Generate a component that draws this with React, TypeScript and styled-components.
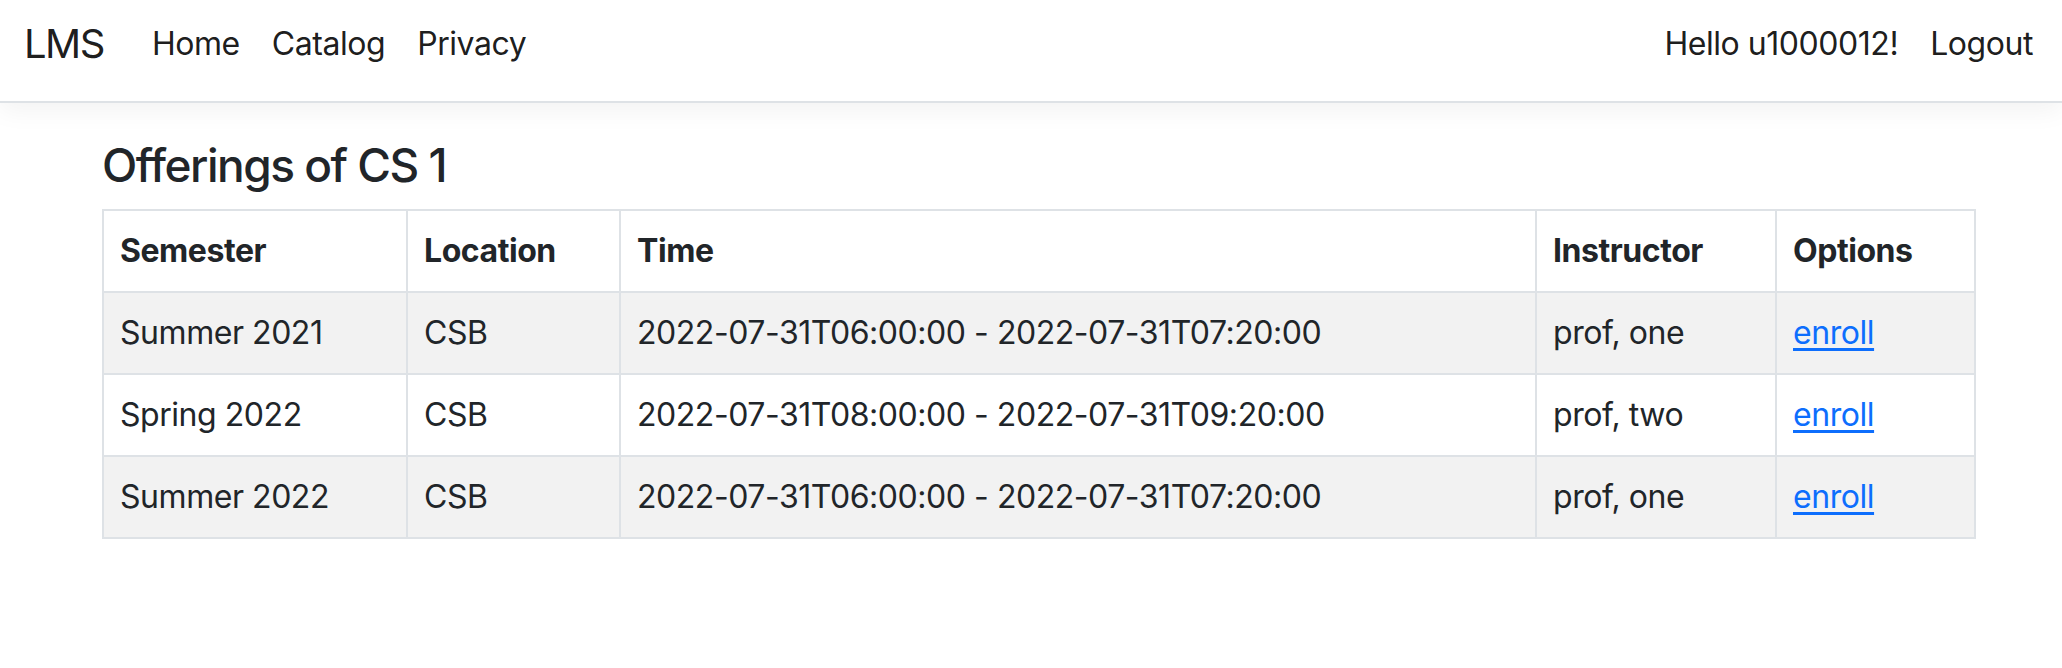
import React from "react";
import styled, { createGlobalStyle } from "styled-components";

const GlobalStyle = createGlobalStyle`
  html, body { margin: 0; padding: 0; background: #fff; }
  body {
    font-family: Inter, "Noto Sans", "Liberation Sans", sans-serif;
    color: #212529;
    font-size: 32px;
    line-height: 1.5;
    letter-spacing: -0.45px;
  }
  * { box-sizing: border-box; }
`;

const NavBar = styled.header`
  display: flex;
  align-items: center;
  justify-content: space-between;
  height: 103px;
  padding: 14px 29px 27px 24px;
  background: #fff;
  border-bottom: 2px solid #dee2e6;
  box-shadow: 0 8px 24px rgba(0, 0, 0, 0.05);
`;

const NavGroup = styled.nav`
  display: flex;
  align-items: center;
`;

const Brand = styled.a`
  font-size: 40px;
  line-height: 60px;
  letter-spacing: -1.5px;
  color: rgba(0, 0, 0, 0.9);
  text-decoration: none;
  margin-right: 32px;
`;

const NavLink = styled.a<{ $last?: boolean }>`
  font-size: 32px;
  line-height: 60px;
  color: rgba(0, 0, 0, 0.9);
  text-decoration: none;
  padding: 0 ${(p) => (p.$last ? "0" : "16px")} 0 16px;
`;

const Main = styled.main`
  padding: 35px 0 32px 102px;
`;

const Heading = styled.h4`
  margin: 0 0 16px;
  font-size: 46px;
  font-weight: 500;
  line-height: 1.2;
  letter-spacing: -1.5px;
`;

const Table = styled.table`
  width: 1872px;
  table-layout: fixed;
  border-collapse: collapse;
  border: 2px solid #dee2e6;
`;

const Col = styled.col<{ $w: number }>`
  width: ${(p) => p.$w}px;
`;

const Row = styled.tr<{ $striped?: boolean }>`
  background: ${(p) => (p.$striped ? "#f2f2f2" : "#fff")};
`;

const HeadCell = styled.th`
  text-align: left;
  font-weight: 700;
  padding: 16px;
  line-height: 48px;
  border: 2px solid #dee2e6;
`;

const Cell = styled.td`
  padding: 16px;
  line-height: 48px;
  border: 2px solid #dee2e6;
  white-space: nowrap;
`;

const Link = styled.a`
  color: #0d6efd;
  text-decoration: underline;
  text-underline-offset: 4px;
`;

const offerings = [
  { sem: "Summer 2021", loc: "CSB", time: "2022-07-31T06:00:00 - 2022-07-31T07:20:00", inst: "prof, one" },
  { sem: "Spring 2022", loc: "CSB", time: "2022-07-31T08:00:00 - 2022-07-31T09:20:00", inst: "prof, two" },
  { sem: "Summer 2022", loc: "CSB", time: "2022-07-31T06:00:00 - 2022-07-31T07:20:00", inst: "prof, one" },
];

const widths = [304, 213, 916, 240, 199];

export default function App() {
  return (
    <>
      <GlobalStyle />
      <NavBar>
        <NavGroup>
          <Brand href="#">LMS</Brand>
          <NavLink href="#">Home</NavLink>
          <NavLink href="#">Catalog</NavLink>
          <NavLink href="#">Privacy</NavLink>
        </NavGroup>
        <NavGroup>
          <NavLink as="span">Hello u1000012!</NavLink>
          <NavLink href="#" $last>Logout</NavLink>
        </NavGroup>
      </NavBar>
      <Main>
        <Heading>Offerings of CS 1</Heading>
        <Table>
          <colgroup>
            {widths.map((w, i) => (
              <Col key={i} $w={w} />
            ))}
          </colgroup>
          <thead>
            <Row>
              <HeadCell>Semester</HeadCell>
              <HeadCell>Location</HeadCell>
              <HeadCell>Time</HeadCell>
              <HeadCell>Instructor</HeadCell>
              <HeadCell>Options</HeadCell>
            </Row>
          </thead>
          <tbody>
            {offerings.map((o, i) => (
              <Row key={i} $striped={i % 2 === 0}>
                <Cell>{o.sem}</Cell>
                <Cell>{o.loc}</Cell>
                <Cell>{o.time}</Cell>
                <Cell>{o.inst}</Cell>
                <Cell>
                  <Link href="#">enroll</Link>
                </Cell>
              </Row>
            ))}
          </tbody>
        </Table>
      </Main>
    </>
  );
}
